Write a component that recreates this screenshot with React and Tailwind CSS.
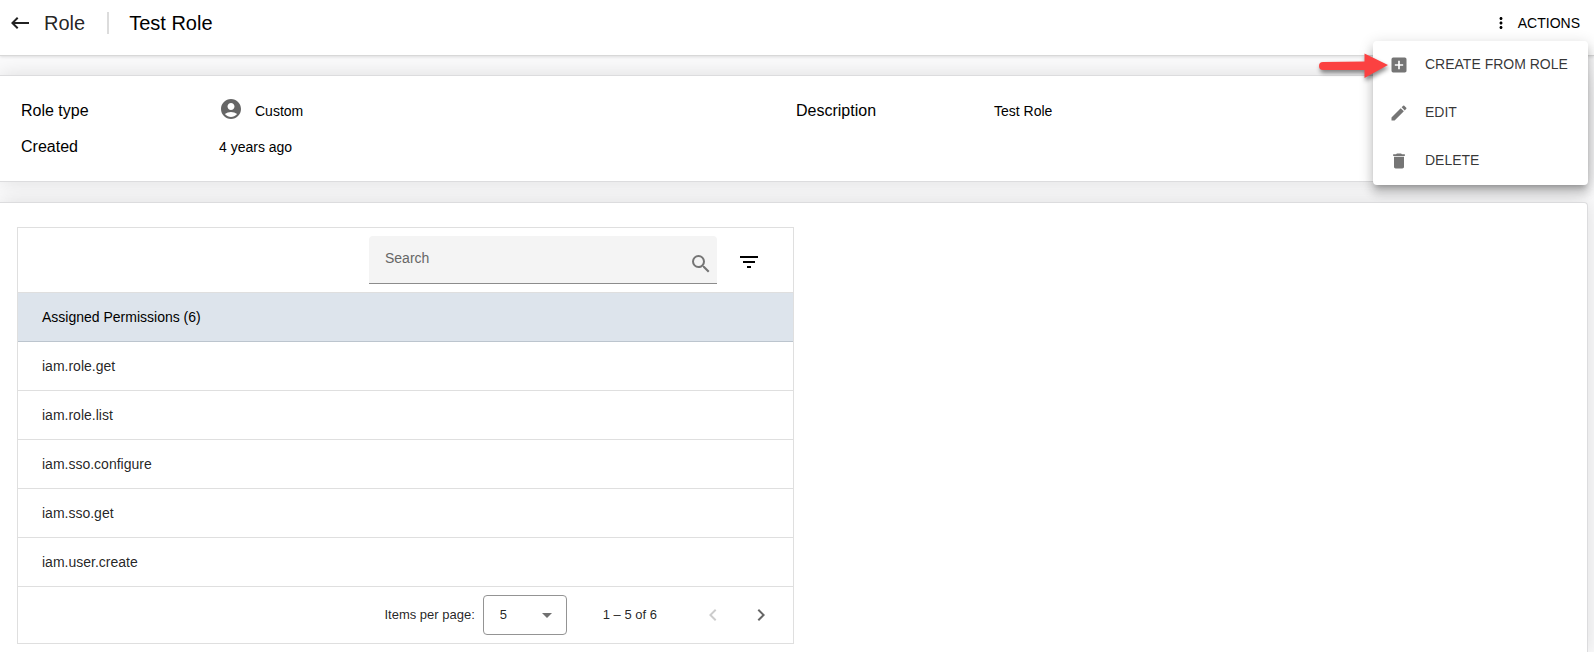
import { useState } from "react";
import {
  MdAccountCircle,
  MdAddBox,
  MdArrowDropDown,
  MdChevronLeft,
  MdChevronRight,
  MdDelete,
  MdEdit,
  MdFilterList,
  MdKeyboardBackspace,
  MdMoreVert,
  MdSearch,
} from "react-icons/md";

const PERMISSIONS = [
  "iam.role.get",
  "iam.role.list",
  "iam.sso.configure",
  "iam.sso.get",
  "iam.user.create",
];

const ACTIONS = [
  { label: "CREATE FROM ROLE", Icon: MdAddBox },
  { label: "EDIT", Icon: MdEdit },
  { label: "DELETE", Icon: MdDelete },
];

function Pointer() {
  return (
    <svg
      viewBox="0 0 72 32"
      className="pointer-events-none absolute top-3 right-[198px] h-8 w-[72px] drop-shadow-[1px_3px_2px_rgba(0,0,0,0.45)]"
      aria-hidden="true"
    >
      <path
        d="M5 9 L46.5 8.5 V0.5 L70 12 L46.5 25 V17 L5 17 A4 4 0 0 1 5 9 Z"
        fill="#fb4141"
      />
    </svg>
  );
}

function ActionsMenu() {
  return (
    <div className="absolute top-[41px] right-[6px] z-20">
      <div
        role="menu"
        className="w-[215px] rounded bg-white shadow-[0_5px_5px_-3px_rgba(0,0,0,0.2),0_8px_10px_1px_rgba(0,0,0,0.14),0_3px_14px_2px_rgba(0,0,0,0.12)]"
      >
        {ACTIONS.map(({ label, Icon }) => (
          <button
            key={label}
            role="menuitem"
            className="flex h-12 w-full items-center gap-4 pl-4 text-left text-sm text-black/80"
          >
            <Icon size={20} className="text-[#757575]" />
            <span className="pb-0.5 whitespace-nowrap">{label}</span>
          </button>
        ))}
      </div>
      <Pointer />
    </div>
  );
}

function Field({ label, children }) {
  return (
    <div className="flex h-9 items-center">
      <dt className="w-[198px] text-base">{label}</dt>
      <dd className="flex items-center text-sm">{children}</dd>
    </div>
  );
}

function PermissionsTable() {
  const [query, setQuery] = useState("");
  const rows = PERMISSIONS.filter((p) => p.includes(query));

  return (
    <div className="border border-[#dfdfdf]">
      <div className="flex h-16 items-center justify-end gap-5 pr-8">
        <label className="flex h-12 w-[348px] items-center rounded-t border-b border-[#8c8c8c] bg-[#f4f4f4] pr-1 pl-4">
          <input
            aria-label="Search"
            value={query}
            onChange={(e) => setQuery(e.target.value)}
            placeholder="Search"
            className="min-w-0 flex-1 pb-1 text-sm outline-none placeholder:text-[#666666]"
          />
          <MdSearch size={24} className="mt-2 text-[#757575]" />
        </label>
        <button aria-label="Filter" className="pt-1">
          <MdFilterList size={24} />
        </button>
      </div>

      <table className="w-full text-left text-sm">
        <thead>
          <tr className="h-[49px] border-t border-b border-t-[#dfdfdf] border-b-[#bcc5ce] bg-[#dde4ec]">
            <th className="px-6 font-normal">Assigned Permissions (6)</th>
          </tr>
        </thead>
        <tbody>
          {rows.map((name) => (
            <tr key={name} className="h-[49px] border-b border-[#dfdfdf]">
              <td className="px-6 text-black/87">{name}</td>
            </tr>
          ))}
        </tbody>
      </table>

      <div className="flex h-14 items-center justify-end pr-5 text-[13px] text-black/87">
        <label htmlFor="page-size" className="mr-2">
          Items per page:
        </label>
        <div className="relative">
          <select
            id="page-size"
            defaultValue="5"
            className="h-10 w-[84px] appearance-none rounded border border-[#949494] pl-4 outline-none"
          >
            <option>5</option>
            <option>10</option>
            <option>25</option>
          </select>
          <MdArrowDropDown
            size={24}
            className="pointer-events-none absolute top-2 right-2 text-[#707070]"
          />
        </div>
        <span className="mr-11 ml-9">1 – 5 of 6</span>
        <button aria-label="Previous page" disabled className="text-black/20">
          <MdChevronLeft size={24} />
        </button>
        <button aria-label="Next page" className="ml-6 text-[#666666]">
          <MdChevronRight size={24} />
        </button>
      </div>
    </div>
  );
}

export default function App() {
  return (
    <div className="relative flex min-h-screen flex-col overflow-hidden bg-[#fafafb] font-['Liberation_Sans',Arial,sans-serif] text-black">
      <header className="z-10 flex h-14 items-center justify-between border-b border-[#d8d8d8] bg-white pr-[14px] pb-[10px] pl-2 shadow-[0_1px_3px_rgba(0,0,0,0.12)]">
        <div className="flex items-center text-xl">
          <a href="#roles" className="flex items-center gap-3 text-black/87">
            <MdKeyboardBackspace size={24} />
            Role
          </a>
          <div className="mr-5 ml-[22px] h-[22px] w-[2px] bg-[#dcdcdc]" />
          <h1>Test Role</h1>
        </div>
        <button className="flex items-center gap-2 text-sm">
          <MdMoreVert size={18} />
          ACTIONS
        </button>
      </header>

      <ActionsMenu />

      <main className="mt-[19px] mr-[6px] flex flex-1 flex-col gap-5">
        <section className="rounded-r border border-l-0 border-[#dcdcde] bg-white pt-[17px] pr-4 pb-4 pl-[21px] shadow-[0_0_20px_rgba(0,0,0,0.12)]">
          <dl className="grid grid-cols-2">
            <div>
              <Field label="Role type">
                <MdAccountCircle size={24} className="mr-3 mb-1 text-[#666666]" />
                Custom
              </Field>
              <Field label="Created">4 years ago</Field>
            </div>
            <div>
              <Field label="Description">Test Role</Field>
            </div>
          </dl>
        </section>

        <section className="flex-1 rounded-tr border-t border-r border-[#dcdcde] bg-white px-4 pt-6 pb-2 shadow-[0_0_20px_rgba(0,0,0,0.12)]">
          <div className="grid grid-cols-2 pl-px">
            <PermissionsTable />
          </div>
        </section>
      </main>
    </div>
  );
}
